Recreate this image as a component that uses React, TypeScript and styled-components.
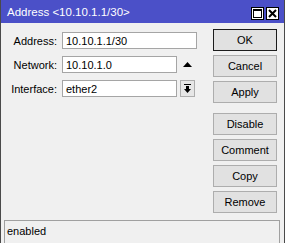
import React from 'react';
import styled, { createGlobalStyle } from 'styled-components';

const GlobalStyle = createGlobalStyle`
  html, body {
    margin: 0;
    padding: 0;
    background: #ffffff;
  }
  body {
    font-family: "Liberation Sans", Arial, sans-serif;
    font-size: 11px;
    color: #000;
  }
`;

const Window = styled.div`
  width: 285px;
  height: 243px;
  box-sizing: border-box;
  border-left: 1px solid #4a4a4a;
  border-right: 1px solid #4a4a4a;
  background: #f0f0f0;
  display: flex;
  flex-direction: column;
  overflow: hidden;
`;

const TitleBar = styled.div`
  height: 23px;
  flex-shrink: 0;
  background: #4b50c8;
  color: #fff;
  display: flex;
  align-items: center;
  justify-content: space-between;
  padding: 0 5px 0 6px;
  font-size: 11.5px;
`;

const TitleButtons = styled.div`
  display: flex;
  gap: 2px;
  margin-top: 3px;
`;

const TitleButton = styled.div`
  width: 13px;
  height: 13px;
  box-sizing: border-box;
  border: 1px solid #000;
  background: #fff;
  display: flex;
  align-items: center;
  justify-content: center;
`;

const Body = styled.div`
  display: flex;
  align-items: flex-start;
  gap: 16px;
  flex-shrink: 0;
`;

const Form = styled.div`
  margin-top: 9px;
  display: grid;
  grid-template-columns: 56px 135px;
  column-gap: 5px;
  row-gap: 7px;
  align-items: center;
`;

const Label = styled.label`
  text-align: right;
  white-space: nowrap;
`;

const FieldRow = styled.div`
  display: flex;
  align-items: center;
  gap: 3px;
`;

const Input = styled.div<{ $width: number }>`
  width: ${p => p.$width}px;
  height: 17px;
  box-sizing: border-box;
  border: 1px solid #a5a5a5;
  background: #fff;
  padding-left: 3px;
  display: flex;
  align-items: center;
`;

const ArrowCell = styled.div`
  width: 15px;
  height: 17px;
  display: flex;
  align-items: center;
  justify-content: center;
`;

const DropButton = styled.div`
  width: 15px;
  height: 17px;
  box-sizing: border-box;
  border: 1px solid #adadad;
  background: #e6e6e6;
  display: flex;
  align-items: center;
  justify-content: center;
`;

const Buttons = styled.div`
  margin-top: 6px;
  display: flex;
  flex-direction: column;
  gap: 4px;
`;

const Button = styled.div<{ $default?: boolean; $spaced?: boolean }>`
  width: 64px;
  height: 22px;
  box-sizing: border-box;
  border: 1px solid ${p => (p.$default ? '#1c1c1c' : '#adadad')};
  background: #e1e1e1;
  display: flex;
  align-items: center;
  justify-content: center;
  margin-top: ${p => (p.$spaced ? '6px' : '0')};
`;

const StatusBar = styled.div`
  margin: 7px 4px 0 3px;
  height: 26px;
  box-sizing: border-box;
  border: 1px solid #a0a0a0;
  padding: 4px 0 0 2px;
  flex-shrink: 0;
`;

const App: React.FC = () => (
  <>
    <GlobalStyle />
    <Window>
      <TitleBar>
        <span>Address &lt;10.10.1.1/30&gt;</span>
        <TitleButtons>
          <TitleButton>
            <svg width="9" height="9" viewBox="0 0 9 9">
              <rect x="0.5" y="0.5" width="8" height="8" fill="none" stroke="#000" />
              <rect x="0" y="0" width="9" height="2" fill="#000" />
            </svg>
          </TitleButton>
          <TitleButton>
            <svg width="9" height="9" viewBox="0 0 9 9">
              <path d="M1 1 L8 8 M8 1 L1 8" stroke="#000" strokeWidth="2" />
            </svg>
          </TitleButton>
        </TitleButtons>
      </TitleBar>
      <Body>
        <Form>
          <Label>Address:</Label>
          <Input $width={135}>10.10.1.1/30</Input>
          <Label>Network:</Label>
          <FieldRow>
            <Input $width={115}>10.10.1.0</Input>
            <ArrowCell>
              <svg width="9" height="5" viewBox="0 0 9 5">
                <path d="M0 5 L4.5 0 L9 5 Z" fill="#000" />
              </svg>
            </ArrowCell>
          </FieldRow>
          <Label>Interface:</Label>
          <FieldRow>
            <Input $width={115}>ether2</Input>
            <DropButton>
              <svg width="7" height="9" viewBox="0 0 7 9">
                <rect x="0" y="0" width="7" height="1" fill="#000" />
                <rect x="2" y="2" width="3" height="3" fill="#000" />
                <path d="M0 5 L7 5 L3.5 9 Z" fill="#000" />
              </svg>
            </DropButton>
          </FieldRow>
        </Form>
        <Buttons>
          <Button $default>OK</Button>
          <Button>Cancel</Button>
          <Button>Apply</Button>
          <Button $spaced>Disable</Button>
          <Button>Comment</Button>
          <Button>Copy</Button>
          <Button>Remove</Button>
        </Buttons>
      </Body>
      <StatusBar>enabled</StatusBar>
    </Window>
  </>
);

export default App;
